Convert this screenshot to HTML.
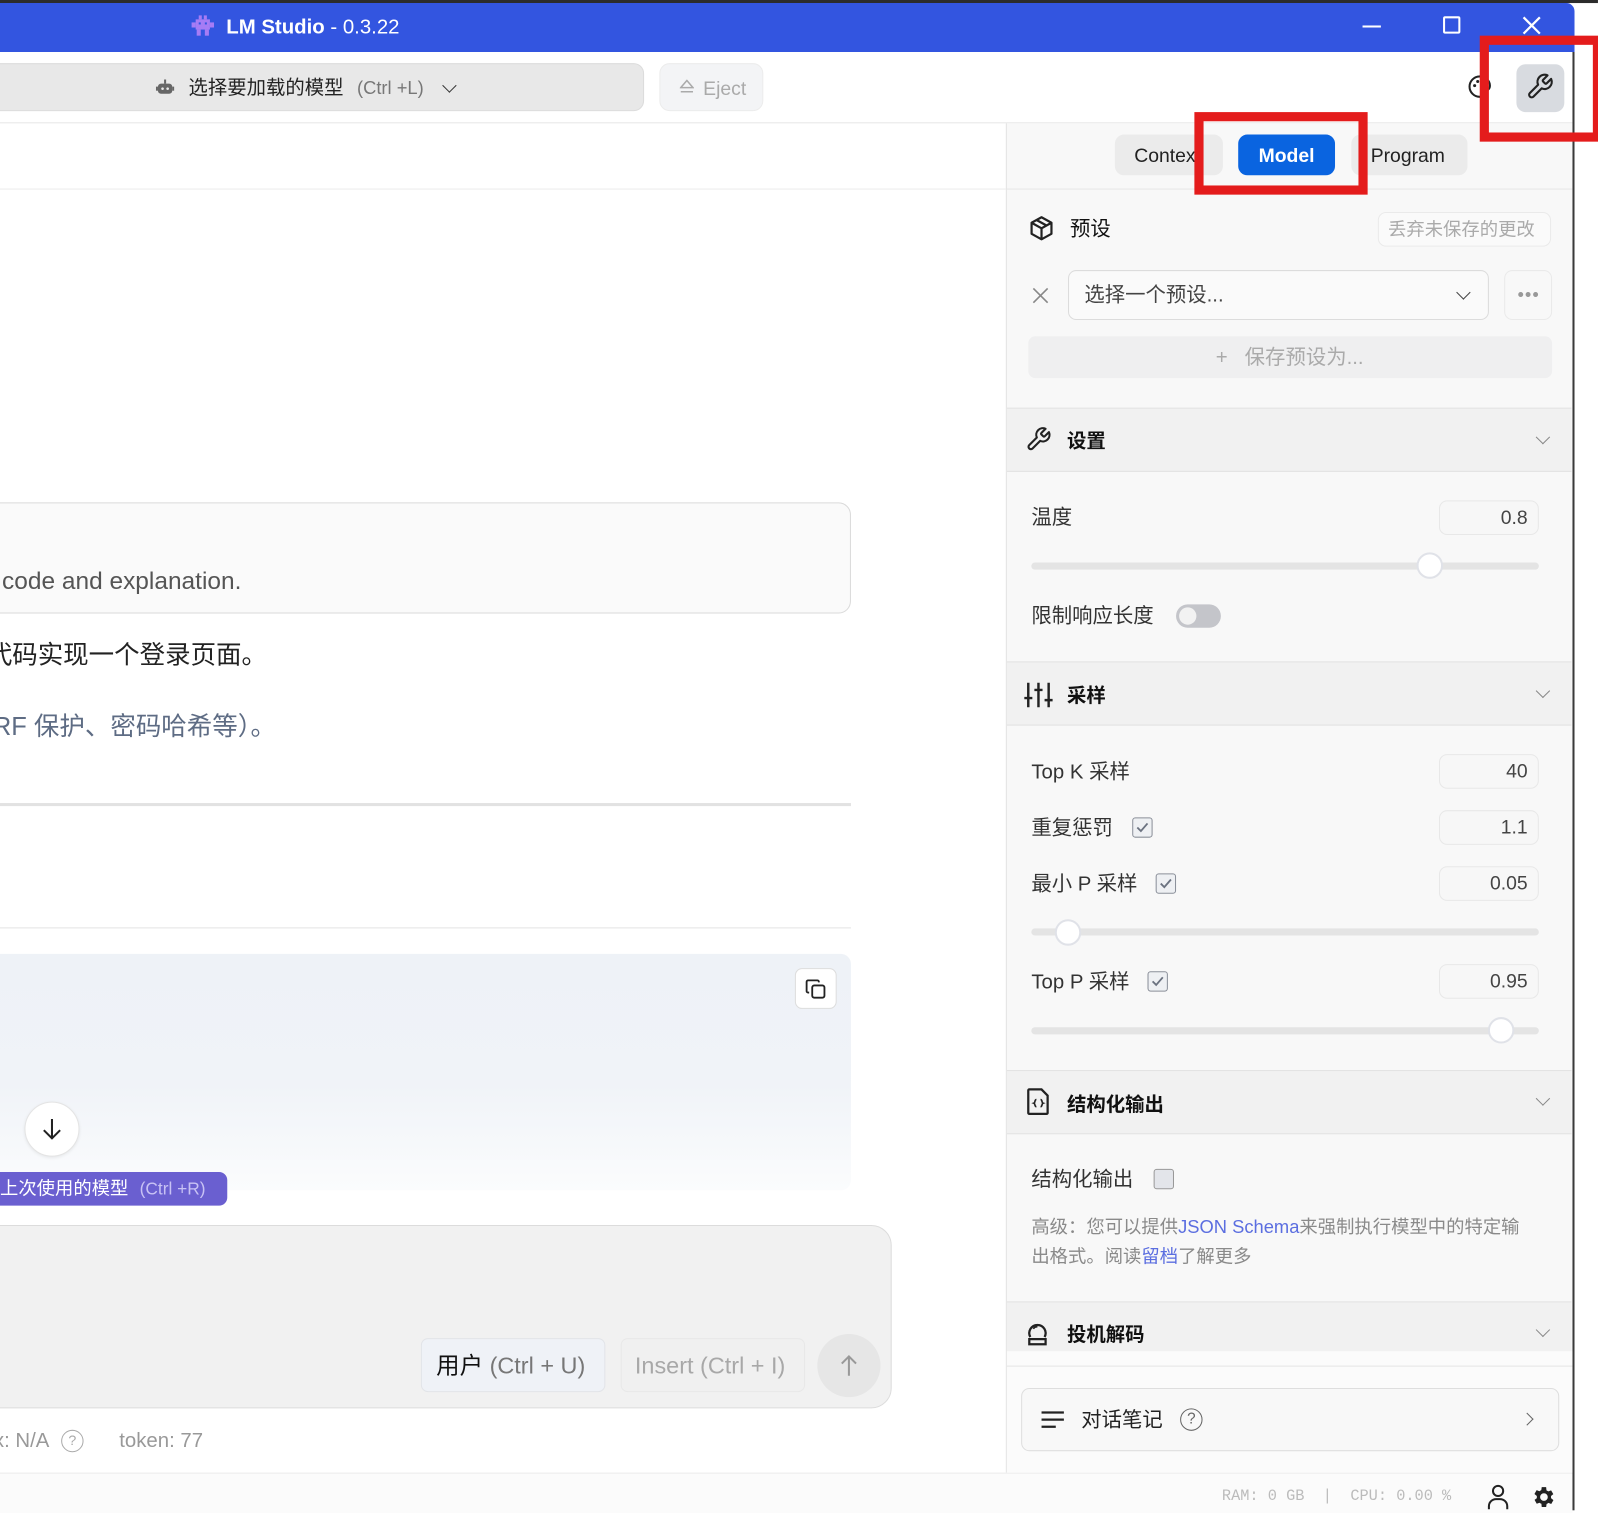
<!DOCTYPE html>
<html><head><meta charset="utf-8">
<style>
*{box-sizing:border-box;margin:0;padding:0}
html,body{width:1598px;height:1510px;overflow:hidden;background:#fff;font-family:"Liberation Sans","Noto Sans CJK SC",sans-serif;color:#222}
#w{position:absolute;left:0;top:0;width:1568px;height:1482px;transform:scale(1.0191);transform-origin:0 0}
.a{position:absolute}
.t{position:absolute;white-space:nowrap;line-height:1}
.hdr{position:absolute;left:988px;width:554px;background:#f1f1f1;border-top:1px solid #e2e2e2;border-bottom:1px solid #e2e2e2}
.hdr .t{font-weight:bold;font-size:19px;color:#111}
.inp{position:absolute;left:1412px;width:98px;height:34px;border:1px solid #e8e8e8;border-radius:8px;background:#f7f7f7;text-align:right;padding-right:10px;font-size:19px;line-height:34px;color:#444}
.lbl{position:absolute;left:1012px;font-size:20px;color:#333;white-space:nowrap;line-height:1}
.cb{position:absolute;width:20px;height:20px;border:1.5px solid #8a8f99;border-radius:3px;background:#eef0f3}
.track{position:absolute;left:1012px;width:498px;height:7px;border-radius:4px;background:#e4e4e4}
.thumb{position:absolute;width:26px;height:26px;border-radius:50%;background:#fff;border:2px solid #e0e2e8}
.chev{position:absolute;width:10px;height:10px;border-right:1.6px solid #888;border-bottom:1.6px solid #888;transform:rotate(45deg)}
</style></head><body><div id="w">

<!-- title bar -->
<div class="a" style="left:0;top:0;width:1568px;height:3px;background:#2c2c2c"></div>
<div class="a" style="left:0;top:3px;width:1545px;height:48px;background:#3355e0;border-top-right-radius:8px"></div>
<svg class="a" style="left:187px;top:15px" width="24" height="22" viewBox="0 0 24 22"><g fill="#a67cf5"><rect x="8" y="0" width="3" height="4"/><rect x="13" y="0" width="3" height="4"/><rect x="5" y="4" width="14" height="10"/><rect x="1" y="7" width="4" height="5"/><rect x="19" y="7" width="4" height="5"/><rect x="6" y="14" width="4" height="6"/><rect x="14" y="14" width="4" height="6"/></g><rect x="8" y="7" width="2" height="2" fill="#3355e0"/><rect x="14" y="7" width="2" height="2" fill="#3355e0"/></svg>
<div class="t" style="left:222px;top:17px;font-size:20px;color:#fff"><b>LM Studio</b> - 0.3.22</div>
<div class="a" style="left:1337px;top:25px;width:18px;height:2px;background:#fff"></div>
<div class="a" style="left:1416px;top:16px;width:17px;height:17px;border:2px solid #fff;border-radius:2px"></div>
<svg class="a" style="left:1493px;top:15px" width="20" height="20"><path d="M2 2L18 18M18 2L2 18" stroke="#fff" stroke-width="2.2"/></svg>

<!-- toolbar -->
<div class="a" style="left:-10px;top:62px;width:642px;height:47px;background:#e8e8e8;border:1px solid #dcdcdc;border-radius:10px"></div>
<svg class="a" style="left:153px;top:78px" width="18" height="16"><rect x="2" y="4" width="14" height="10" rx="3" fill="#666"/><rect x="8" y="0" width="2" height="4" fill="#666"/><rect x="0" y="7" width="2" height="4" fill="#666"/><rect x="16" y="7" width="2" height="4" fill="#666"/><circle cx="6.5" cy="9" r="1.3" fill="#e8e8e8"/><circle cx="11.5" cy="9" r="1.3" fill="#e8e8e8"/></svg>
<div class="t" style="left:185px;top:77px;font-size:19px;color:#222">选择要加载的模型 <span style="color:#777;font-size:18px;margin-left:8px">(Ctrl +L)</span></div>
<div class="chev" style="left:436px;top:79px;border-color:#333"></div>
<div class="a" style="left:647px;top:62px;width:102px;height:47px;background:#f3f4f6;border:1px solid #ececec;border-radius:10px"></div>
<svg class="a" style="left:667px;top:78px" width="14" height="14"><path d="M7 1L13 8H1Z" fill="none" stroke="#aaa" stroke-width="1.5"/><path d="M1 12H13" stroke="#aaa" stroke-width="1.5"/></svg>
<div class="t" style="left:690px;top:78px;font-size:19px;color:#aaa">Eject</div>
<svg class="a" style="left:1440px;top:73px" width="24" height="24" viewBox="0 0 24 24"><path d="M12 2a10 10 0 1 0 0 20c1.5 0 2-1 2-2s-1-2 0-3 2-1 3-1c3 0 5-2 5-5 0-5-4.5-9-10-9z" fill="none" stroke="#222" stroke-width="2"/><circle cx="7" cy="11" r="1.5" fill="#222"/><circle cx="10" cy="7" r="1.5" fill="#222"/><circle cx="15" cy="7" r="1.5" fill="#222"/></svg>
<div class="a" style="left:1488px;top:63px;width:47px;height:47px;background:#d8dbe0;border-radius:9px"></div>
<svg class="a" style="left:1497px;top:71px" width="28" height="28" viewBox="0 0 24 24"><path d="M14.7 6.3a1 1 0 0 0 0 1.4l1.6 1.6a1 1 0 0 0 1.4 0l3.77-3.77a6 6 0 0 1-7.94 7.940l-6.91 6.91a2.12 2.12 0 0 1-3-3l6.91-6.91a6 6 0 0 1 7.94-7.94l-3.760 3.76z" fill="none" stroke="#222" stroke-width="1.8" stroke-linejoin="round"/></svg>
<div class="a" style="left:0;top:120px;width:1543px;height:1px;background:#e6e6e6"></div>

<!-- left chat -->
<div class="a" style="left:0;top:185px;width:987px;height:1px;background:#ececec"></div>
<div class="a" style="left:-12px;top:493px;width:847px;height:109px;background:#fafafa;border:1px solid #dadada;border-radius:12px"></div>
<div class="t" style="left:2px;top:559px;font-size:24px;color:#555">code and explanation.</div>
<div class="t" style="left:-13px;top:631px;font-size:25px;color:#222">代码实现一个登录页面。</div>
<div class="t" style="left:-7px;top:701px;font-size:25px;color:#5e6c84">RF 保护、密码哈希等）。</div>
<div class="a" style="left:0;top:788px;width:835px;height:3px;background:#e2e2e2"></div>
<div class="a" style="left:0;top:910px;width:835px;height:1px;background:#e4e4e4"></div>
<div class="a" style="left:0;top:936px;width:835px;height:232px;background:linear-gradient(#eef2f7 0%,#f0f3f8 55%,#fbfcfd 100%);border-radius:0 10px 10px 0"></div>
<div class="a" style="left:780px;top:950px;width:41px;height:40px;background:#fff;border:1px solid #ddd;border-radius:7px"></div>
<svg class="a" style="left:790px;top:960px" width="22" height="22" viewBox="0 0 22 22"><rect x="7" y="7" width="12" height="12" rx="2" fill="none" stroke="#222" stroke-width="1.8"/><path d="M4 14H3a1.5 1.5 0 0 1-1.5-1.5v-9A1.5 1.5 0 0 1 3 2h9a1.5 1.5 0 0 1 1.5 1.5V4" fill="none" stroke="#222" stroke-width="1.8"/></svg>
<div class="a" style="left:24px;top:1081px;width:54px;height:54px;border-radius:50%;background:#fff;border:1px solid #e4e4e4;box-shadow:0 1px 3px rgba(0,0,0,.08)"></div>
<svg class="a" style="left:40px;top:1096px" width="22" height="24"><path d="M11 2V21M3 13l8 8 8-8" fill="none" stroke="#222" stroke-width="2"/></svg>
<div class="a" style="left:-10px;top:1150px;width:233px;height:33px;background:#6a5fd0;border-radius:8px"></div>
<div class="t" style="left:0;top:1157px;font-size:18px;color:#fff">上次使用的模型 <span style="color:#c8c2f4;font-size:17px;margin-left:6px">(Ctrl +R)</span></div>
<div class="a" style="left:-20px;top:1202px;width:895px;height:180px;background:#f1f1f1;border:1px solid #dcdcdc;border-radius:20px"></div>
<div class="a" style="left:413px;top:1313px;width:181px;height:53px;background:#eff2f7;border:1px solid #e2e4e8;border-radius:7px"></div>
<div class="t" style="left:428px;top:1329px;font-size:23px;color:#111">用户 <span style="color:#777">(Ctrl + U)</span></div>
<div class="a" style="left:609px;top:1313px;width:181px;height:53px;background:#f0f0f0;border:1px solid #e8e8e8;border-radius:7px"></div>
<div class="t" style="left:623px;top:1329px;font-size:23px;color:#a8a8a8">Insert (Ctrl + I)</div>
<div class="a" style="left:802px;top:1309px;width:62px;height:62px;border-radius:50%;background:#e6e6e6"></div>
<svg class="a" style="left:823px;top:1328px" width="20" height="24"><path d="M10 22V3M3 10l7-7 7 7" fill="none" stroke="#999" stroke-width="2"/></svg>
<div class="t" style="left:-6px;top:1404px;font-size:20px;color:#999">x: N/A</div>
<div class="a" style="left:60px;top:1403px;width:22px;height:22px;border:1.5px solid #aaa;border-radius:50%;font-size:14px;color:#aaa;text-align:center;line-height:19px">?</div>
<div class="t" style="left:117px;top:1404px;font-size:20px;color:#999">token: 77</div>
<div class="a" style="left:0;top:1445px;width:1543px;height:40px;background:#fbfbfb;border-top:1px solid #ebebeb"></div>
<div class="t" style="left:1199px;top:1461px;font-family:'Liberation Mono',monospace;font-size:15px;color:#bbb">RAM: 0 GB &nbsp;| &nbsp;CPU: 0.00 %</div>
<svg class="a" style="left:1458px;top:1456px" width="24" height="26" viewBox="0 0 24 26"><circle cx="12" cy="7" r="5" fill="none" stroke="#222" stroke-width="2"/><path d="M3 25v-3a7 7 0 0 1 7-7h4a7 7 0 0 1 7 7v3" fill="none" stroke="#222" stroke-width="2"/></svg>
<svg class="a" style="left:1502px;top:1456px" width="26" height="26" viewBox="0 0 24 24"><path fill="#222" d="M19.4 13a7.5 7.5 0 0 0 0-2l2.1-1.6-2-3.5-2.5 1a7.6 7.6 0 0 0-1.7-1L15 3h-4l-.4 2.7a7.6 7.6 0 0 0-1.7 1l-2.5-1-2 3.5L6.6 11a7.5 7.5 0 0 0 0 2l-2.1 1.6 2 3.5 2.5-1a7.6 7.6 0 0 0 1.7 1L11 21h4l.4-2.7a7.6 7.6 0 0 0 1.7-1l2.5 1 2-3.5zM13 15.5a3.5 3.5 0 1 1 0-7 3.5 3.5 0 0 1 0 7z" transform="translate(-1 0)"/></svg>

<!-- right panel -->
<div class="a" style="left:987px;top:121px;width:556px;height:1324px;background:#f8f8f8;border-left:1px solid #e3e3e3"></div>
<div class="a" style="left:1543px;top:51px;width:2px;height:1431px;background:#3a3a3a"></div>
<div class="a" style="left:988px;top:185px;width:555px;height:1px;background:#e6e6e6"></div>
<div class="a" style="left:1094px;top:132px;width:106px;height:40px;background:#ebebeb;border-radius:9px"></div>
<div class="t" style="left:1113px;top:144px;font-size:19px;color:#222">Context</div>
<div class="a" style="left:1215px;top:132px;width:95px;height:40px;background:#0a64e0;border-radius:9px"></div>
<div class="t" style="left:1235px;top:144px;font-size:19px;color:#fff;font-weight:bold">Model</div>
<div class="a" style="left:1326px;top:132px;width:114px;height:40px;background:#ebebeb;border-radius:9px"></div>
<div class="t" style="left:1345px;top:144px;font-size:19px;color:#222">Program</div>

<svg class="a" style="left:1009px;top:211px" width="26" height="26" viewBox="0 0 24 24"><path d="M12 2l9 5v10l-9 5-9-5V7z M3 7l9 5 9-5 M12 12v10 M7.5 4.5l9 5" fill="none" stroke="#222" stroke-width="2" stroke-linejoin="round"/></svg>
<div class="t" style="left:1050px;top:215px;font-size:20px;color:#111">预设</div>
<div class="a" style="left:1352px;top:208px;width:170px;height:34px;border:1px solid #eaeaea;border-radius:8px;background:#fafafa"></div>
<div class="t" style="left:1362px;top:216px;font-size:18px;color:#aaa">丢弃未保存的更改</div>
<svg class="a" style="left:1013px;top:282px" width="16" height="16"><path d="M1 1L15 15M15 1L1 15" stroke="#888" stroke-width="1.6"/></svg>
<div class="a" style="left:1048px;top:265px;width:413px;height:49px;border:1px solid #dcdcdc;border-radius:8px;background:#fafafa"></div>
<div class="t" style="left:1064px;top:280px;font-size:20px;color:#444">选择一个预设...</div>
<div class="chev" style="left:1431px;top:282px;border-color:#444"></div>
<div class="a" style="left:1476px;top:265px;width:47px;height:49px;border:1px solid #eaeaea;border-radius:8px"></div>
<div class="t" style="left:1489px;top:280px;font-size:18px;color:#999;letter-spacing:1px">•••</div>
<div class="a" style="left:1009px;top:330px;width:514px;height:41px;background:#efeff0;border-radius:7px"></div>
<div class="t" style="left:1193px;top:341px;font-size:20px;color:#aaa">+&nbsp;&nbsp; 保存预设为...</div>

<div class="hdr" style="top:400px;height:63px"><div class="t" style="left:59px;top:23px">设置</div></div>
<svg class="a" style="left:1006px;top:418px" width="26" height="26" viewBox="0 0 24 24"><path d="M14.7 6.3a1 1 0 0 0 0 1.4l1.6 1.6a1 1 0 0 0 1.4 0l3.77-3.77a6 6 0 0 1-7.94 7.94l-6.91 6.91a2.12 2.12 0 0 1-3-3l6.91-6.91a6 6 0 0 1 7.94-7.94l-3.76 3.76z" fill="none" stroke="#222" stroke-width="1.9" stroke-linejoin="round"/></svg>
<div class="chev" style="left:1509px;top:424px"></div>
<div class="lbl" style="top:498px">温度</div>
<div class="inp" style="top:491px">0.8</div>
<div class="track" style="top:552px"></div>
<div class="thumb" style="left:1390px;top:542px"></div>
<div class="lbl" style="top:595px">限制响应长度</div>
<div class="a" style="left:1154px;top:593px;width:44px;height:23px;border-radius:12px;background:#c4c5ca"></div>
<div class="a" style="left:1157px;top:596px;width:17px;height:17px;border-radius:50%;background:#f2f2f2"></div>

<div class="hdr" style="top:649px;height:63px"><div class="t" style="left:59px;top:24px">采样</div></div>
<svg class="a" style="left:1005px;top:669px" width="28" height="26" viewBox="0 0 28 26"><g stroke="#222" stroke-width="2.4"><path d="M4 1V25M14 1V25M24 1V25"/><path d="M0 16H8M10 8H18M20 18H28"/></g></svg>
<div class="chev" style="left:1509px;top:673px"></div>
<div class="lbl" style="top:748px">Top K 采样</div>
<div class="inp" style="top:740px">40</div>
<div class="lbl" style="top:803px">重复惩罚</div>
<div class="cb" style="left:1111px;top:802px"></div>
<svg class="a" style="left:1114px;top:806px" width="14" height="12"><path d="M2 6l3.5 3.5L12 2" fill="none" stroke="#6b7280" stroke-width="1.8"/></svg>
<div class="inp" style="top:795px">1.1</div>
<div class="lbl" style="top:858px">最小 P 采样</div>
<div class="cb" style="left:1134px;top:857px"></div>
<svg class="a" style="left:1137px;top:861px" width="14" height="12"><path d="M2 6l3.5 3.5L12 2" fill="none" stroke="#6b7280" stroke-width="1.8"/></svg>
<div class="inp" style="top:850px">0.05</div>
<div class="track" style="top:911px"></div>
<div class="thumb" style="left:1035px;top:902px"></div>
<div class="lbl" style="top:954px">Top P 采样</div>
<div class="cb" style="left:1126px;top:953px"></div>
<svg class="a" style="left:1129px;top:957px" width="14" height="12"><path d="M2 6l3.5 3.5L12 2" fill="none" stroke="#6b7280" stroke-width="1.8"/></svg>
<div class="inp" style="top:946px">0.95</div>
<div class="track" style="top:1008px"></div>
<div class="thumb" style="left:1460px;top:998px"></div>

<div class="hdr" style="top:1050px;height:63px"><div class="t" style="left:59px;top:24px">结构化输出</div></div>
<svg class="a" style="left:1007px;top:1067px" width="24" height="28" viewBox="0 0 24 28"><path d="M3 2h12l6 6v17a1 1 0 0 1-1 1H3a1 1 0 0 1-1-1V3a1 1 0 0 1 1-1z" fill="none" stroke="#222" stroke-width="2.2"/><path d="M10 12c-2 0-1 3-2.5 3.5C9 16 8 19 10 19M14 12c2 0 1 3 2.5 3.5C15 16 16 19 14 19" fill="none" stroke="#222" stroke-width="1.6"/></svg>
<div class="chev" style="left:1509px;top:1073px"></div>
<div class="lbl" style="top:1148px">结构化输出</div>
<div class="cb" style="left:1132px;top:1147px;border-color:#999;background:#e3e5ea"></div>
<div class="t" style="left:1012px;top:1190px;font-size:18px;color:#8a8a8a;line-height:1.6">高级：您可以提供<span style="color:#5b6ee0">JSON Schema</span>来强制执行模型中的特定输<br>出格式。阅读<span style="color:#5b6ee0">留档</span>了解更多</div>

<div class="hdr" style="top:1277px;height:49px;border-bottom:none"><div class="t" style="left:59px;top:23px">投机解码</div></div>
<svg class="a" style="left:1006px;top:1296px" width="24" height="26" viewBox="0 0 24 26"><path d="M5 16a8 8 0 1 1 14 0" fill="none" stroke="#222" stroke-width="2.2"/><path d="M4 18h16v5H4z" fill="none" stroke="#222" stroke-width="2.2"/><path d="M8 8a4 4 0 0 1 4-2" fill="none" stroke="#222" stroke-width="1.6"/></svg>
<div class="chev" style="left:1509px;top:1300px"></div>
<div class="a" style="left:988px;top:1326px;width:555px;height:119px;background:#fbfbfb"></div>
<div class="a" style="left:988px;top:1340px;width:555px;height:1px;background:#e4e4e4"></div>
<div class="a" style="left:1002px;top:1362px;width:528px;height:62px;background:#f8f8f8;border:1px solid #dedede;border-radius:8px"></div>
<svg class="a" style="left:1022px;top:1384px" width="22" height="18"><path d="M0 2H22M0 9H22M0 16H14" stroke="#222" stroke-width="2.2"/></svg>
<div class="t" style="left:1061px;top:1384px;font-size:20px;color:#222">对话笔记</div>
<div class="a" style="left:1158px;top:1382px;width:22px;height:22px;border:1.6px solid #666;border-radius:50%;font-size:15px;color:#666;text-align:center;line-height:19px">?</div>
<div class="a" style="left:1494px;top:1388px;width:9px;height:9px;border-right:1.6px solid #666;border-bottom:1.6px solid #666;transform:rotate(-45deg)"></div>

<!-- red annotation boxes -->
<div class="a" style="left:1172px;top:110px;width:170px;height:81px;border:9px solid #e41c1c"></div>
<div class="a" style="left:1452px;top:35px;width:120px;height:104px;border:9px solid #e41c1c"></div>
</div></body></html>
